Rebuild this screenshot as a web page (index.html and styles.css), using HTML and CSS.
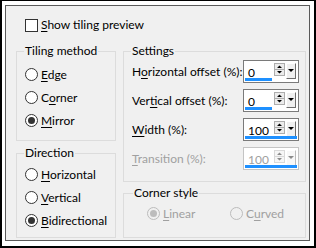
FILE: index.html
```html
<!DOCTYPE html>
<html lang="en">
<head>
    <meta charset="UTF-8">
    <title>Tile Settings</title>
    <link rel="stylesheet" href="styles.css">
</head>
<body>

<div class="window">
    <div class="dialog">
        <!-- Preview toggle -->
        <div class="check-row">
            <span class="checkbox"></span>
            <span><u>S</u>how tiling preview</span>
        </div>

        <div class="columns">
            <div class="col-left">
                <div class="group tiling">
                    <div class="group-title">Tiling method</div>
                    <div class="radio-list">
                        <div class="radio"><span class="dot"></span><span><u>E</u>dge</span></div>
                        <div class="radio"><span class="dot"></span><span>C<u>o</u>rner</span></div>
                        <div class="radio checked"><span class="dot"></span><span><u>M</u>irror</span></div>
                    </div>
                </div>

                <div class="group direction">
                    <div class="group-title">Direction</div>
                    <div class="radio-list">
                        <div class="radio"><span class="dot"></span><span><u>H</u>orizontal</span></div>
                        <div class="radio"><span class="dot"></span><span><u>V</u>ertical</span></div>
                        <div class="radio checked"><span class="dot"></span><span><u>B</u>idirectional</span></div>
                    </div>
                </div>
            </div>

            <div class="col-right">
                <div class="group settings">
                    <div class="group-title">Settings</div>
                    <div class="fields">
                        <div class="field">
                            <span>H<u>o</u>rizontal offset (%):</span>
                            <div class="spin">
                                <span class="spin-value">0</span>
                                <span class="spin-arrows"></span>
                                <span class="spin-drop"></span>
                                <span class="spin-bar" style="width: 27px"></span>
                            </div>
                        </div>
                        <div class="field">
                            <span>Ver<u>t</u>ical offset (%):</span>
                            <div class="spin">
                                <span class="spin-value">0</span>
                                <span class="spin-arrows"></span>
                                <span class="spin-drop"></span>
                                <span class="spin-bar" style="width: 27px"></span>
                            </div>
                        </div>
                        <div class="field">
                            <span><u>W</u>idth (%):</span>
                            <div class="spin">
                                <span class="spin-value">100</span>
                                <span class="spin-arrows"></span>
                                <span class="spin-drop"></span>
                                <span class="spin-bar" style="width: 52px"></span>
                            </div>
                        </div>
                        <div class="field disabled">
                            <span><u>T</u>ransition (%):</span>
                            <div class="spin">
                                <span class="spin-value">100</span>
                                <span class="spin-arrows"></span>
                                <span class="spin-drop"></span>
                                <span class="spin-bar" style="width: 52px"></span>
                            </div>
                        </div>
                    </div>
                </div>

                <div class="group corner">
                    <div class="group-title">Corner style</div>
                    <div class="radio-row">
                        <div class="radio checked disabled linear"><span class="dot"></span><span><u>L</u>inear</span></div>
                        <div class="radio disabled"><span class="dot"></span><span>C<u>u</u>rved</span></div>
                    </div>
                </div>
            </div>
        </div>
    </div>
</div>

</body>
</html>
```

FILE: styles.css
```css
body {
    margin: 0;
    background: #fff;
    font-family: Lato, "Noto Sans", sans-serif;
    font-size: 12px;
    color: #000;
}
u {
    text-decoration-thickness: 1px;
    text-underline-offset: 2px;
}
.window {
    width: 316px;
    height: 248px;
    box-sizing: border-box;
    border-style: solid;
    border-color: #000;
    border-width: 1px 2px 2px 2px;
    padding: 4px 4px 5px 3px;
}
.dialog {
    height: 236px;
    box-sizing: border-box;
    border: 1px solid #5a5a5a;
    background: #f0f0f0;
    padding-top: 11px;
}
.check-row {
    display: flex;
    align-items: center;
    height: 16px;
    line-height: 16px;
    padding-left: 19px;
    gap: 3px;
}
.checkbox {
    width: 13px;
    height: 13px;
    box-sizing: border-box;
    border: 1px solid #333;
    background: #fff;
}
.columns {
    display: flex;
    gap: 7px;
    padding-left: 10px;
    margin-top: 18px;
}
.col-left,
.col-right {
    display: flex;
    flex-direction: column;
}
.col-left {
    width: 100px;
    gap: 12px;
}
.col-right {
    width: 183px;
    gap: 11px;
}
.group {
    border: 1px solid #dcdcdc;
    box-sizing: border-box;
    padding: 0 6px 0 8px;
}
.group-title {
    width: fit-content;
    margin: -9px 0 0 -1px;
    padding: 0 1px;
    line-height: 16px;
    background: #f0f0f0;
}
.tiling { height: 90px; }
.direction { height: 85px; }
.settings { height: 131px; }
.corner { height: 45px; padding-left: 10px; }

.tiling .radio-list { margin-top: 4px; }
.direction .radio-list { margin-top: 2px; }

.radio {
    display: flex;
    align-items: center;
    gap: 3px;
    height: 23px;
}
.dot {
    width: 13px;
    height: 13px;
    box-sizing: border-box;
    border: 1px solid #333;
    border-radius: 50%;
    background: #fff;
    display: flex;
    align-items: center;
    justify-content: center;
}
.radio.checked .dot::after {
    content: "";
    width: 7px;
    height: 7px;
    border-radius: 50%;
    background: #333;
}
.radio.disabled {
    color: #a0a0a0;
}
.radio.disabled .dot {
    border-color: #bcbcbc;
    background: #f0f0f0;
}
.radio.disabled.checked .dot::after {
    background: #bcbcbc;
}
.radio-row {
    display: flex;
    margin-top: 1px;
    padding-left: 13px;
}
.linear {
    width: 83px;
}

.fields {
    display: flex;
    flex-direction: column;
    gap: 6px;
    margin-top: 1px;
}
.field {
    display: flex;
    align-items: center;
    justify-content: space-between;
    height: 23px;
}
.field.disabled {
    color: #a0a0a0;
}
.spin {
    position: relative;
    display: flex;
    align-items: flex-start;
    width: 56px;
    height: 23px;
    box-sizing: border-box;
    border: 1px solid #7a7a7a;
    background: #fff;
    padding: 2px 2px 0 0;
}
.spin-value {
    width: 30px;
    box-sizing: border-box;
    padding: 3px 0 0 4px;
    line-height: 14px;
}
.spin-arrows {
    width: 11px;
    height: 13px;
    margin-right: 1px;
    background:
        url("data:image/svg+xml,%3Csvg xmlns='http://www.w3.org/2000/svg' width='11' height='13'%3E%3Crect x='.5' y='.5' width='10' height='12' fill='%23ececec' stroke='%23adadad'/%3E%3Cpath d='M0 6.5h11' stroke='%23adadad'/%3E%3Cpath d='M3 5h5L5.5 2.5z M3 8h5l-2.5 2.5z' fill='%23000'/%3E%3C/svg%3E");
}
.spin-drop {
    width: 10px;
    height: 16px;
    box-sizing: border-box;
    border-style: solid;
    border-width: 1px;
    border-color: #fff #6d6d6d #6d6d6d #fff;
    background: #f0f0f0;
    position: relative;
}
.spin-drop::after {
    content: "";
    position: absolute;
    left: 1px;
    top: 5px;
    border-left: 3px solid transparent;
    border-right: 3px solid transparent;
    border-top: 3px solid #000;
}
.spin-bar {
    position: absolute;
    left: 1px;
    bottom: 1px;
    height: 3px;
    background: #1e90ff;
}
.field.disabled .spin {
    border-color: #c4c4c4;
}
.field.disabled .spin-arrows,
.field.disabled .spin-drop {
    opacity: 0.45;
}
```
